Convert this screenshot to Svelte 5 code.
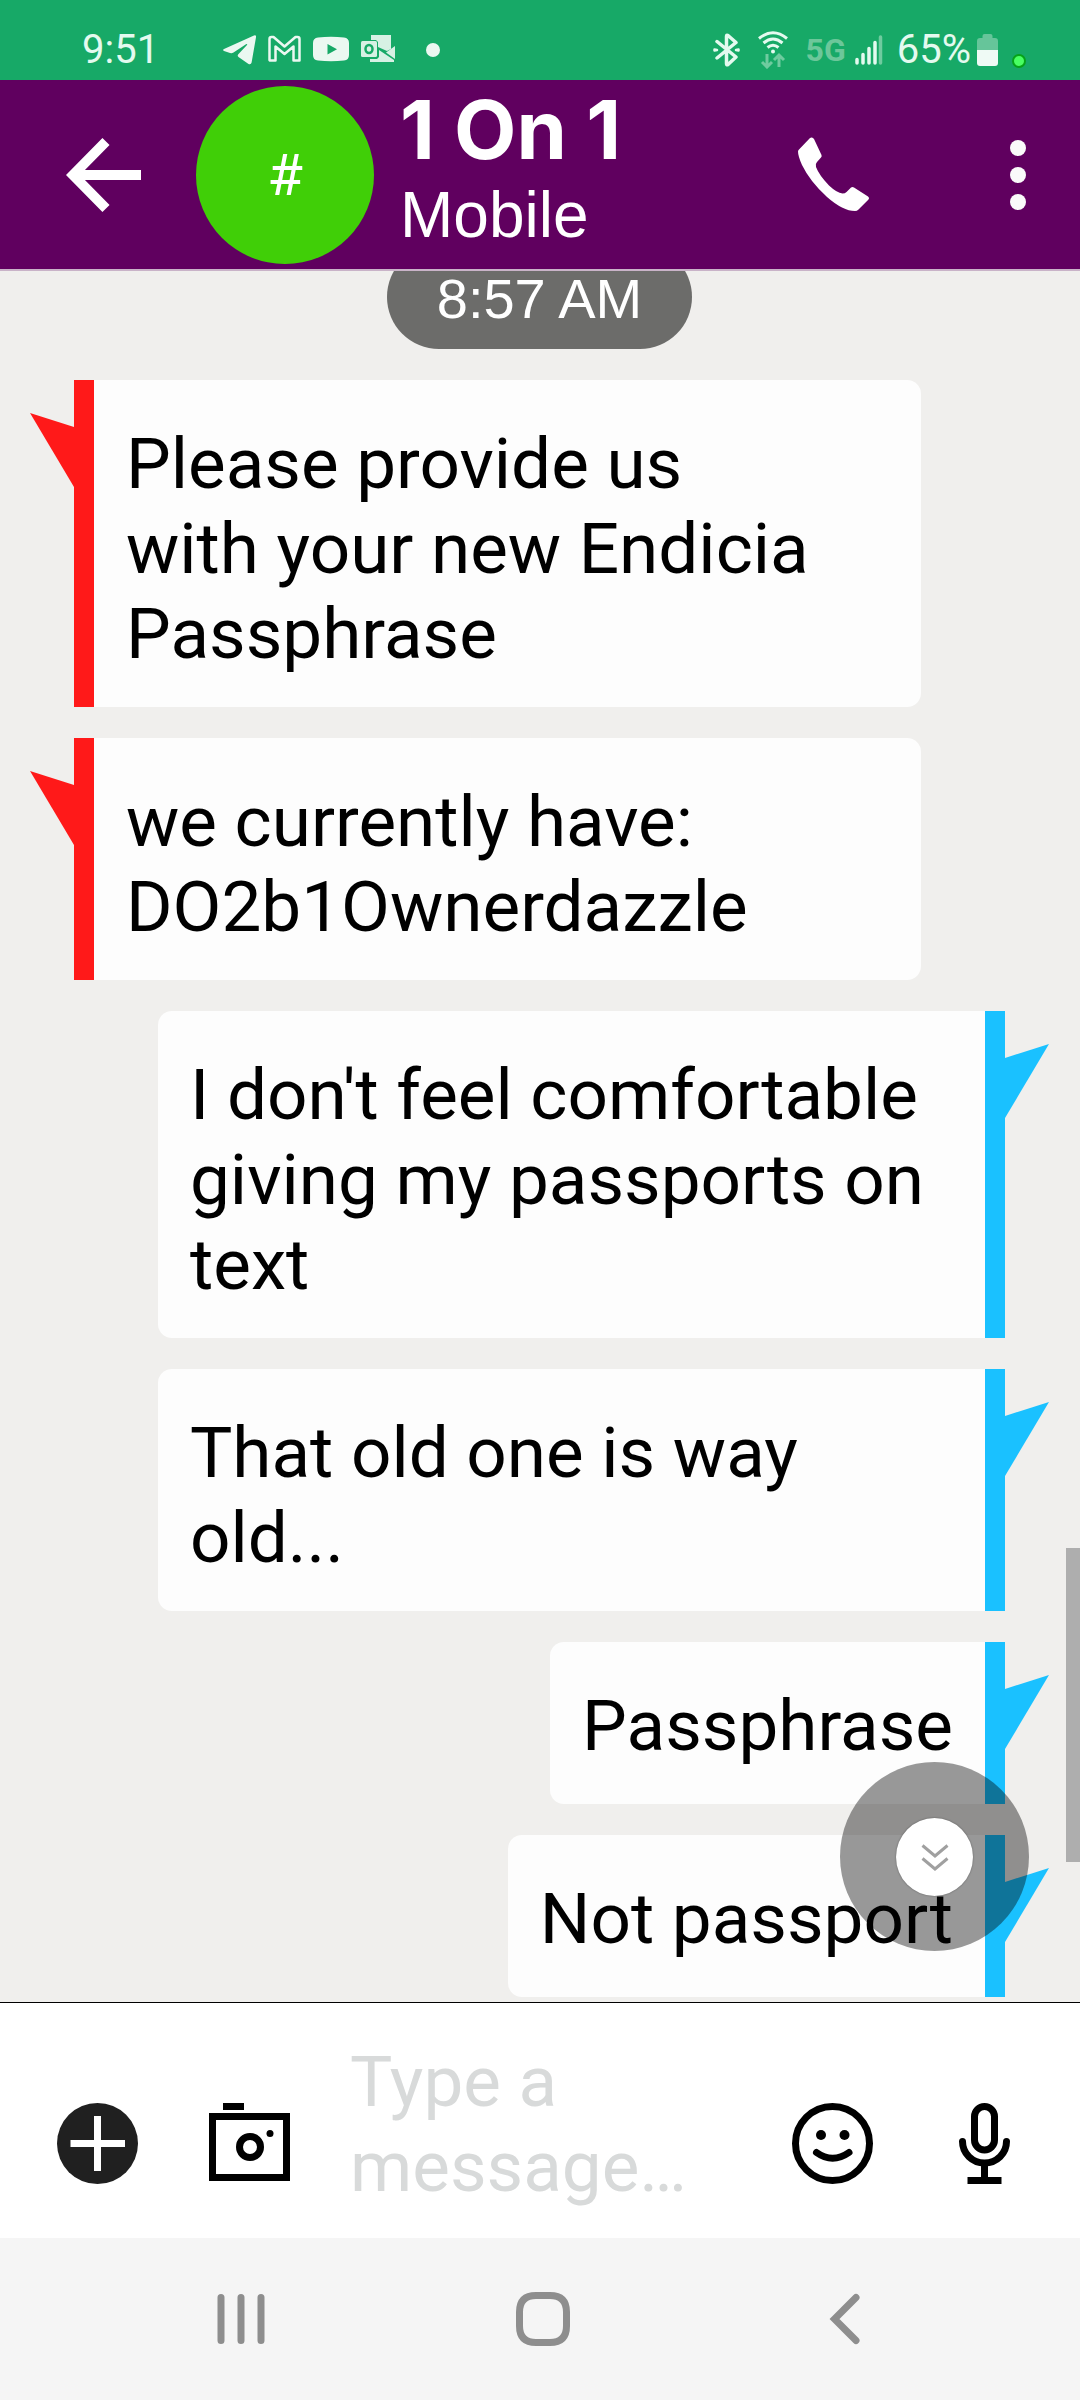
<script lang="ts">
  type Message = {
    id: number;
    own: boolean;
    text: string;
  };

  const contact = { name: "1 On 1", line: "Mobile", initial: "#" };

  const messages: Message[] = [
    { id: 1, own: false, text: "Please provide us with your new Endicia Passphrase" },
    { id: 2, own: false, text: "we currently have: DO2b1Ownerdazzle" },
    { id: 3, own: true, text: "I don't feel comfortable giving my passports on text" },
    { id: 4, own: true, text: "That old one is way old..." },
    { id: 5, own: true, text: "Passphrase" },
    { id: 6, own: true, text: "Not passport" },
  ];

  let draft = $state("");
</script>

<div class="screen">
  <div class="status">
    <span class="time">9:51</span>
    <div class="notices">
      <svg width="33" height="30" viewBox="0 0 33 30" fill="#ebf8f1" aria-hidden="true">
        <path d="M1 14 31 .5Q33.4-.2 33 2.2L28.6 27.5Q28 30 25.5 29L15.5 22Q14 20.600 15.300 19.200L24 10Q24.800 8.600 23 9.300L10.500 17.500Q8.800 18.500 7 18L1 16Q-.8 15 1 14Z" />
      </svg>
      <svg width="33" height="30" viewBox="0 0 33 30" fill="none" stroke="#ebf8f1" stroke-width="2.5" stroke-linejoin="round" aria-hidden="true">
        <path d="M1.500 25V4Q1.500 2 3.500 2H5.500L16.500 11.500 27.500 2H29.500Q31.500 2 31.500 4V25.500H25.500V11.500L16.500 19 7.500 11.500V25.500H2Z" />
      </svg>
      <svg width="36" height="30" viewBox="0 0 36 30" fill="#ebf8f1" aria-hidden="true">
        <path fill-rule="evenodd" d="M5 2.500Q18 1 31 2.500Q36 3 36 8V20Q36 25 31 25.500Q18 27 5 25.500Q0 25 0 20V8Q0 3 5 2.500ZM14.500 9V19.500L24 14.200Z" />
      </svg>
      <svg width="35" height="30" viewBox="0 0 35 30" aria-hidden="true">
        <g fill="#d7f1e4">
          <path d="M10 0H30V14L26 16 17 12V7L15 5H10Z" />
          <path d="M34 11V24L25 17.500ZM18 15 33 25V27H9V24H16L18 22Z" />
          <rect x="0" y="6" width="16" height="16" rx="1.500" />
        </g>
        <ellipse cx="8" cy="14" rx="3.500" ry="4" fill="none" stroke="#17a967" stroke-width="2.500" />
      </svg>
      <span class="more-dot"></span>
    </div>

    <div class="radio">
      <svg width="27" height="34" viewBox="0 0 27 34" fill="none" stroke="#e4faef" stroke-width="3.500" stroke-linecap="round" stroke-linejoin="round" aria-hidden="true">
        <path d="M4 8.500 23 24 15 31.500Q13.500 32.500 13.500 30.500V3.500Q13.500 1.500 15 2.500L23 9.500 4 25" />
        <path d="M1.500 16.500 4 17 1.500 17.500ZM25.500 16.500 23 17 25.500 17.500Z" stroke-width="2.500" />
      </svg>
      <svg width="30" height="38" viewBox="0 0 30 38" fill="none" aria-hidden="true">
        <g stroke="#e4faef" stroke-width="3">
          <path d="M1 7.500Q15-4 29 7.500" />
          <path d="M5.500 12Q15 4 24.500 12" />
          <path d="M9.500 16.500Q15 12 20.500 16.500" />
        </g>
        <circle cx="15" cy="20.500" r="2" fill="#e4faef" />
        <g stroke="#6fcb9f" stroke-width="3">
          <path d="M9 23V36M4 31 9 36 14 31" />
          <path d="M21 36V24M16 29 21 24 26 29" />
        </g>
      </svg>
      <span class="network">5G</span>
      <svg width="28" height="30" viewBox="0 0 28 30" stroke="#e4faef" stroke-width="3.500" stroke-linecap="round" aria-hidden="true">
        <path d="M2 24.500V28M8 19.500V28M14 13.500V28M20 7.500V28" />
        <path d="M25.500 2V28" stroke="#6fcb9f" />
      </svg>
      <span class="charge">65%</span>
      <svg width="21" height="32" viewBox="0 0 21 32" aria-hidden="true">
        <path d="M5.500 4V2Q5.500 0 7.500 0H13.500Q15.500 0 15.500 2V4H18Q21 4 21 7V16H0V7Q0 4 3 4Z" fill="#66c59a" />
        <path d="M0 16H21V29Q21 32 18 32H3Q0 32 0 29Z" fill="#effaf5" />
      </svg>
      <span class="privacy-dot"></span>
    </div>
  </div>

  <header class="bar">
    <button class="icon" type="button" aria-label="Back">
      <svg width="75" height="76" viewBox="0 0 75 76" fill="none" stroke="#fff" stroke-width="10" aria-hidden="true">
        <path d="M40 4.500 7 38 40 71.500M8 38H75" />
      </svg>
    </button>
    <div class="avatar">{contact.initial}</div>
    <div class="who">
      <h1>{contact.name}</h1>
      <p>{contact.line}</p>
    </div>
    <button class="icon call" type="button" aria-label="Call">
      <svg width="72" height="76" viewBox="0 0 72 76" fill="#fff" aria-hidden="true">
        <path d="M14 .5Q15.500 1 16 2L23.500 18Q24 19.500 23 20.500L19 25Q17 27 18 30Q21 38 31 48.500Q39 56 44.500 56.500Q47 56.500 48.500 55L53 50.500Q54.500 49.500 56 50.500L70 59.500Q72 61 70.500 62.500L60.500 72.500Q59 74 57 74Q45 74 29 60Q12 44.500 4 28Q0 19 0 14.500Q0 13.500 1 12.500L12 1Q13 .3 14 .5Z" />
      </svg>
    </button>
    <button class="icon" type="button" aria-label="More options">
      <svg width="16" height="72" viewBox="0 0 16 72" fill="#fafafa" aria-hidden="true">
        <circle cx="8" cy="9" r="8" />
        <circle cx="8" cy="36" r="8" />
        <circle cx="8" cy="63" r="8" />
      </svg>
    </button>
  </header>

  <main class="chat">
    <time class="stamp">8:57 AM</time>
    {#each messages as m (m.id)}
      <div class="row" class:own={m.own}>
        <svg class="tail" width="44" height="74" viewBox="0 0 44 74" aria-hidden="true">
          <path d="M0 0 44 14V74Z" fill="currentColor" />
        </svg>
        <p class="bubble">{m.text}</p>
      </div>
    {/each}

    <div class="thumb"></div>
    <button class="jump" type="button" aria-label="Scroll to latest">
      <span class="jump-core">
        <svg width="28" height="28" viewBox="0 0 28 28" fill="none" stroke="#a0a0a0" stroke-width="3" aria-hidden="true">
          <path d="M1.500 2.500 14 13 26.500 2.500M1.500 15.500 14 26 26.500 15.500" />
        </svg>
      </span>
    </button>
  </main>

  <form class="composer" onsubmit={(e) => e.preventDefault()}>
    <div class="tools">
      <button class="icon" type="button" aria-label="Add attachment">
        <svg width="81" height="81" viewBox="0 0 81 81" aria-hidden="true">
          <circle cx="40.500" cy="40.500" r="40.500" fill="#202020" />
          <path d="M40.500 13V68M13.500 40.500H68" stroke="#fff" stroke-width="7" />
        </svg>
      </button>
      <button class="icon" type="button" aria-label="Camera">
        <svg width="81" height="81" viewBox="0 0 81 81" fill="none" aria-hidden="true">
          <rect x="14" y="0" width="21" height="7" fill="#000" />
          <rect x="3.500" y="13.500" width="74" height="61" stroke="#000" stroke-width="7" />
          <circle cx="41" cy="44" r="10.500" stroke="#000" stroke-width="7" />
          <circle cx="61" cy="30.500" r="3.500" fill="#000" />
        </svg>
      </button>
    </div>
    <textarea rows="2" placeholder="Type a message…" aria-label="Message" bind:value={draft}></textarea>
    <div class="tools">
      <button class="icon" type="button" aria-label="Emoji">
        <svg width="81" height="81" viewBox="0 0 81 81" fill="none" stroke="#000" stroke-width="7" aria-hidden="true">
          <circle cx="40.500" cy="40.500" r="37" />
          <circle cx="29" cy="32" r="5" fill="#000" stroke="none" />
          <circle cx="52.500" cy="32" r="5" fill="#000" stroke="none" />
          <path d="M24.500 49.500Q40.500 61 57 49.500" stroke-linecap="round" />
        </svg>
      </button>
      <button class="icon" type="button" aria-label="Record voice">
        <svg width="81" height="81" viewBox="0 0 81 81" fill="none" stroke="#000" stroke-width="7" aria-hidden="true">
          <rect x="30.500" y="3.500" width="20" height="43.500" rx="10" />
          <path d="M18.500 38.500A22 21.500 0 0 0 62.500 38.500" stroke-linecap="round" />
          <path d="M40.500 60V76M23.500 77.500H57.500" />
        </svg>
      </button>
    </div>
  </form>

  <nav class="system">
    <button class="icon" type="button" aria-label="Recent apps">
      <svg width="54" height="54" viewBox="0 0 54 54" stroke="#8e8e8e" stroke-width="7" stroke-linecap="round" aria-hidden="true">
        <path d="M7 5.500V48.500M27 5.500V48.500M47 5.500V48.500" />
      </svg>
    </button>
    <button class="icon" type="button" aria-label="Home">
      <svg width="54" height="54" viewBox="0 0 54 54" fill="none" stroke="#8e8e8e" stroke-width="7" aria-hidden="true">
        <path d="M20 3.500H34Q50.500 3.500 50.500 20V34Q50.500 50.500 34 50.500H20Q3.500 50.500 3.500 34V20Q3.500 3.500 20 3.500Z" />
      </svg>
    </button>
    <button class="icon" type="button" aria-label="Back">
      <svg width="54" height="54" viewBox="0 0 54 54" fill="none" stroke="#8e8e8e" stroke-width="7" stroke-linecap="round" aria-hidden="true">
        <path d="M38 5.500 16.500 27 38 48.500" />
      </svg>
    </button>
  </nav>
</div>

<style>
  :global(body) {
    margin: 0;
  }

  .screen {
    display: flex;
    flex-direction: column;
    height: 100vh;
    overflow: hidden;
    font-family: Roboto, "Liberation Sans", sans-serif;
    color: #000;
  }

  svg {
    display: block;
    flex: none;
  }

  .icon {
    display: block;
    flex: none;
    padding: 0;
    border: 0;
    background: none;
    cursor: pointer;
  }

  /* ── status bar ── */
  .status {
    display: flex;
    align-items: center;
    flex: none;
    box-sizing: border-box;
    height: 80px;
    padding: 20px 54px 0 82px;
    background: #17a967;
    color: #e4faef;
    font-size: 40px;
    line-height: 60px;
  }
  .notices {
    display: flex;
    align-items: center;
    gap: 12px;
    margin-left: 64px;
  }
  .more-dot {
    width: 14px;
    height: 14px;
    margin-left: 18px;
    border-radius: 50%;
    background: #ebf8f1;
  }
  .radio {
    display: flex;
    align-items: center;
    margin-left: auto;
    gap: 12px;
  }
  .radio svg:first-child {
    margin-right: 6px;
  }
  .network {
    margin: 0 -3px 0 6px;
    color: #6cc79a;
    font-size: 32px;
    font-weight: 700;
  }
  .charge {
    margin: 0 -6px 0 2px;
  }
  .privacy-dot {
    box-sizing: border-box;
    width: 14px;
    height: 14px;
    margin: 22px 0 0 2px;
    border: 2px solid #06a318;
    border-radius: 50%;
    background: #48ff62;
  }

  /* ── conversation header ── */
  .bar {
    display: flex;
    align-items: center;
    flex: none;
    box-sizing: border-box;
    height: 191px;
    padding: 0 54px 0 66px;
    border-bottom: 2px solid #c9b3c8;
    background: #60005f;
    color: #fff;
  }
  .avatar {
    display: flex;
    align-items: center;
    justify-content: center;
    flex: none;
    width: 178px;
    height: 178px;
    margin: 0 26px 0 55px;
    border-radius: 50%;
    background: #40cf07;
    font-size: 58px;
  }
  .who {
    align-self: flex-start;
    min-width: 0;
    padding-top: 2px;
    white-space: nowrap;
  }
  .who h1 {
    margin: 0;
    font-family: Inter, "Liberation Sans", sans-serif;
    font-size: 81px;
    font-weight: 700;
    line-height: 96px;
  }
  .who p {
    margin: 0;
    font-family: "Liberation Sans", Arial, sans-serif;
    font-size: 64px;
    line-height: 74px;
  }
  .call {
    margin: 0 140px 0 auto;
  }

  /* ── messages ── */
  .chat {
    position: relative;
    display: flex;
    flex: 1;
    flex-direction: column;
    justify-content: flex-end;
    gap: 31px;
    min-height: 0;
    padding: 0 31px 5px 30px;
    overflow: hidden;
    background: #f0efed;
  }
  .stamp {
    flex: none;
    align-self: center;
    padding: 26px 50px 22px;
    border-radius: 52px;
    background: #6c6c6a;
    color: #fff;
    font-family: "Liberation Sans", Arial, sans-serif;
    font-size: 56px;
    line-height: 56px;
  }
  .row {
    display: flex;
    flex: none;
    align-items: flex-start;
    margin-right: 128px;
    color: #ff1919;
  }
  .row.own {
    flex-direction: row-reverse;
    margin: 0 0 0 128px;
    color: #1ac1ff;
  }
  .tail {
    margin-top: 33px;
  }
  .own .tail {
    transform: scaleX(-1);
  }
  .bubble {
    box-sizing: border-box;
    min-height: 162px;
    margin: 0;
    padding: 41px 100px 31px 32px;
    border-left: 20px solid #ff1919;
    border-radius: 0 14px 14px 0;
    background: #fdfdfd;
    color: #000;
    font-size: 71px;
    line-height: 85px;
  }
  .own .bubble {
    padding-right: 32px;
    border-right: 20px solid #1ac1ff;
    border-left: 0;
    border-radius: 14px 0 0 14px;
  }

  .thumb {
    position: absolute;
    right: 0;
    bottom: 140px;
    width: 14px;
    height: 314px;
    background: #aeaeae;
  }
  .jump {
    position: absolute;
    right: 51px;
    bottom: 51px;
    display: flex;
    align-items: center;
    justify-content: center;
    width: 189px;
    height: 189px;
    padding: 0;
    border: 0;
    border-radius: 50%;
    background: rgba(0, 0, 0, 0.4);
    cursor: pointer;
  }
  .jump-core {
    display: flex;
    align-items: center;
    justify-content: center;
    width: 77px;
    height: 77px;
    padding-top: 1px;
    border-radius: 50%;
    background: #fff;
    box-shadow: 0 0 2px rgba(0, 0, 0, 0.4);
  }

  /* ── composer ── */
  .composer {
    display: flex;
    align-items: flex-end;
    flex: none;
    gap: 60px;
    padding: 36px 55px 29px 57px;
    border-top: 1px solid #000;
    background: #fff;
  }
  .tools {
    display: flex;
    gap: 71px;
    padding-bottom: 25px;
  }
  textarea {
    display: block;
    flex: 1;
    min-width: 0;
    height: 170px;
    padding: 0;
    border: 0;
    outline: 0;
    background: none;
    color: #000;
    font-family: inherit;
    font-size: 71px;
    line-height: 85px;
    resize: none;
    overflow: hidden;
  }
  textarea::placeholder {
    color: #d8dada;
    opacity: 1;
  }

  /* ── system navigation ── */
  .system {
    display: grid;
    grid-template-columns: repeat(3, 1fr);
    place-items: center;
    flex: none;
    height: 162px;
    padding: 0 84px 0 90px;
    background: #f5f5f5;
  }
</style>
